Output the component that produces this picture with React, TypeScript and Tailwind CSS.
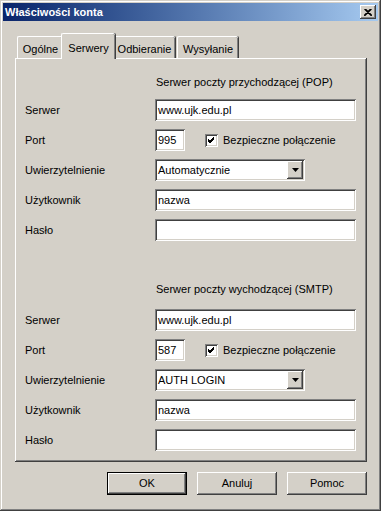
import type { ReactNode } from "react";

const raised =
  "shadow-[inset_-1px_-1px_#404040,inset_1px_1px_#ffffff,inset_-2px_-2px_#808080,inset_2px_2px_#d4d0c8]";
const sunken =
  "shadow-[inset_1px_1px_#808080,inset_-1px_-1px_#ffffff,inset_2px_2px_#404040,inset_-2px_-2px_#d4d0c8]";

function Field({ value = "", className = "w-[201px]" }: { value?: string; className?: string }) {
  return (
    <div className={`h-[22px] bg-white ${sunken} flex items-center pl-[3px] ${className}`}>
      <span className="leading-[13px]">{value}</span>
    </div>
  );
}

function Check({ label }: { label: string }) {
  return (
    <div className="ml-[20px] flex items-center">
      <div className={`w-[13px] h-[13px] bg-white ${sunken} flex items-center justify-center`}>
        <svg width="7" height="7" viewBox="0 0 7 7" aria-hidden="true">
          <path d="M0 2 L2 4 L6 0 M0 3 L2 5 L6 1 M0 4 L2 6 L6 2" stroke="#000" strokeWidth="1" fill="none" shapeRendering="crispEdges" />
        </svg>
      </div>
      <span className="ml-[5px]">{label}</span>
    </div>
  );
}

function Select({ value }: { value: string }) {
  return (
    <div className={`w-[150px] h-[22px] bg-white ${sunken} flex items-center pl-[3px] pr-[2px]`}>
      <span className="flex-1">{value}</span>
      <div className={`w-[16px] h-[18px] bg-[#d4d0c8] ${raised} flex items-center justify-center`}>
        <svg width="7" height="4" viewBox="0 0 7 4" aria-hidden="true">
          <path d="M0 0 H7 L3.5 4 Z" fill="#000" />
        </svg>
      </div>
    </div>
  );
}

function Row({ label, children }: { label: string; children: ReactNode }) {
  return (
    <div className="flex items-center h-[22px]">
      <span className="w-[130px]">{label}</span>
      {children}
    </div>
  );
}

function Section({
  title,
  port,
  auth,
  className,
}: {
  title: string;
  port: string;
  auth: string;
  className: string;
}) {
  return (
    <div className={className}>
      <div className="pl-[131px] h-[13px] leading-[13px]">{title}</div>
      <div className="flex flex-col gap-[8px]">
        <Row label="Serwer">
          <Field value="www.ujk.edu.pl" />
        </Row>
        <Row label="Port">
          <Field value={port} className="w-[30px]" />
          <Check label="Bezpieczne połączenie" />
        </Row>
        <Row label="Uwierzytelnienie">
          <Select value={auth} />
        </Row>
        <Row label="Użytkownik">
          <Field value="nazwa" />
        </Row>
        <Row label="Hasło">
          <Field />
        </Row>
      </div>
    </div>
  );
}

function Tab({ label, active = false, className = "" }: { label: string; active?: boolean; className?: string }) {
  if (active) {
    return (
      <div
        className={`relative z-10 -mx-[2px] -mb-[1px] h-[26px] bg-[#d4d0c8] rounded-t-[2px] border-t border-l border-white shadow-[inset_-1px_0_#808080,1px_0_#404040] pt-[6px] text-center ${className}`}
      >
        {label}
      </div>
    );
  }
  return (
    <div
      className={`h-[22px] rounded-t-[2px] border-t border-l border-white shadow-[inset_-1px_0_#808080,1px_0_#404040] pt-[4px] text-center ${className}`}
    >
      {label}
    </div>
  );
}

function Button({ label, isDefault = false }: { label: string; isDefault?: boolean }) {
  if (isDefault) {
    return (
      <div className="w-[80px] h-[23px] border border-black">
        <div className={`h-full flex items-center justify-center ${raised}`}>{label}</div>
      </div>
    );
  }
  return (
    <div className={`w-[80px] h-[23px] flex items-center justify-center ${raised}`}>{label}</div>
  );
}

export default function App() {
  return (
    <div
      className="w-[381px] h-[511px] bg-[#d4d0c8] p-[3px] text-[11px] text-black shadow-[inset_-1px_-1px_#404040,inset_1px_1px_#d4d0c8,inset_-2px_-2px_#808080,inset_2px_2px_#ffffff]"
      style={{ fontFamily: '"Liberation Sans", Arial, sans-serif' }}
    >
      <div className="h-[18px] bg-gradient-to-r from-[#0a246a] to-[#a6caf0] flex items-center justify-between pl-[2px] pr-[2px]">
        <span className="text-white font-bold text-[11px]">Właściwości konta</span>
        <div className={`w-[16px] h-[14px] bg-[#d4d0c8] ${raised} flex items-center justify-center`}>
          <svg width="8" height="7" viewBox="0 0 8 7" aria-hidden="true">
            <path d="M0.5 0 L7.5 7 M1.5 0 L8 6.5 M7.5 0 L0.5 7 M6.5 0 L0 6.5" stroke="#000" strokeWidth="1.1" fill="none" />
          </svg>
        </div>
      </div>

      <div className="ml-[12px] mt-[12px] w-[352px]">
        <div className="flex items-end h-[25px] pl-[2px]">
          <Tab label="Ogólne" className="w-[46px]" />
          <Tab label="Serwery" active className="w-[54px]" />
          <Tab label="Odbieranie" className="w-[62px]" />
          <Tab label="Wysyłanie" className="ml-[2px] w-[61px]" />
        </div>
        <div className={`h-[404px] pl-[10px] pt-[18px] ${raised}`}>
          <Section
            title="Serwer poczty przychodzącej (POP)"
            port="995"
            auth="Automatycznie"
            className="flex flex-col gap-[10px]"
          />
          <Section
            title="Serwer poczty wychodzącej (SMTP)"
            port="587"
            auth="AUTH LOGIN"
            className="mt-[42px] flex flex-col gap-[13px]"
          />
        </div>
      </div>

      <div className="flex justify-end gap-[10px] mt-[10px] mr-[11px]">
        <Button label="OK" isDefault />
        <Button label="Anuluj" />
        <Button label="Pomoc" />
      </div>
    </div>
  );
}
